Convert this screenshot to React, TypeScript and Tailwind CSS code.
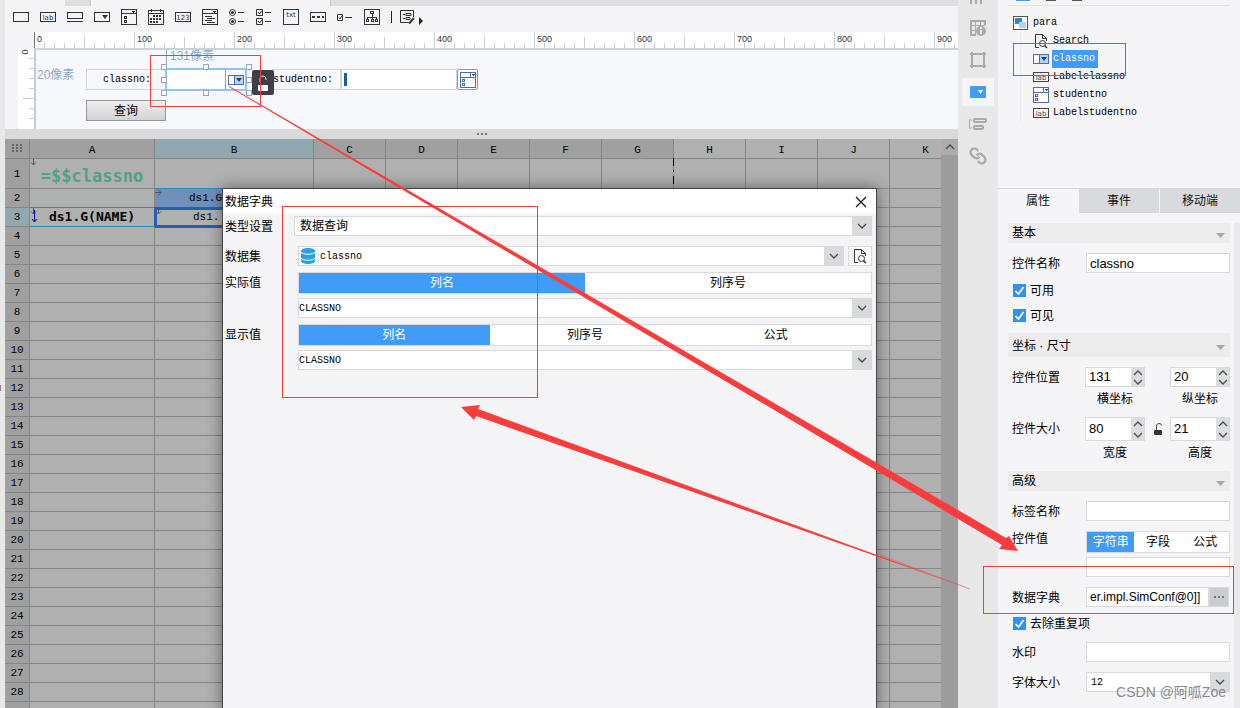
import React from 'react';
import clsx from 'clsx';

const MONO = "font-['Liberation_Mono','Noto_Sans_CJK_SC',monospace]";
const MONO_SANS = "font-['DejaVu_Sans_Mono','Noto_Sans_CJK_SC',monospace]";

interface IconProps {
  children: React.ReactNode;
  className?: string;
}

const Icon: React.FC<IconProps> = ({ children, className }) => (
  <svg
    viewBox="0 0 16 16"
    width="16"
    height="16"
    fill="none"
    stroke="currentColor"
    shapeRendering="crispEdges"
    className={clsx('shrink-0', className)}
    aria-hidden="true"
  >
    {children}
  </svg>
);

const iconText = {
  stroke: 'none',
  fill: 'currentColor',
  textAnchor: 'middle' as const,
  fontFamily: 'DejaVu Sans',
};

const LabelIcon = ({ className }: { className?: string }) => (
  <Icon className={className}>
    <rect x="0.5" y="3.5" width="15" height="9" />
    <text x="8" y="11" fontSize="7" {...iconText}>lab</text>
  </Icon>
);

const ComboIcon = () => (
  <Icon className="text-[#4a6ea9]">
    <rect x="0.5" y="3.5" width="15" height="9" fill="#fff" />
    <rect x="6.5" y="3.5" width="9" height="9" fill="#b9d2f0" />
    <path d="M8 6h6l-3 4z" fill="#223f80" stroke="none" shapeRendering="auto" />
  </Icon>
);

const ListBoxIcon = () => (
  <Icon className="text-[#4a6ea9]">
    <rect x="0.5" y="0.5" width="15" height="15" fill="#fff" />
    <path d="M0 5.5h16M10.5 0v5" />
    <path d="M11 2h4l-2 2z" fill="#223f80" stroke="none" />
    <rect x="2.5" y="7.5" width="2" height="2" />
    <rect x="2.5" y="11.5" width="2" height="2" />
  </Icon>
);

const PageSearchIcon = () => (
  <Icon className="text-[#333]">
    <g shapeRendering="auto">
      <path d="M6 14.5H2.5v-13h7l4 4V8M9.5 1.5v4h4" />
      <circle cx="9.5" cy="10.5" r="3" />
      <path d="M11.5 12.5l2.5 2.5" strokeWidth="1.5" />
    </g>
  </Icon>
);

const Chevron = ({ up }: { up?: boolean }) => (
  <svg width="10" height="6" viewBox="0 0 10 6" fill="none" stroke="#4b4b4b" aria-hidden="true">
    <path d={up ? 'M1 5l4-4 4 4' : 'M1 1l4 4 4-4'} strokeWidth="1.3" />
  </svg>
);

const toolIcons: { name: string; art: React.ReactNode }[] = [
  { name: 'Text field', art: <rect x="0.5" y="3.5" width="15" height="9" /> },
  {
    name: 'Label',
    art: (
      <>
        <rect x="0.5" y="3.5" width="15" height="9" />
        <text x="8" y="11" fontSize="7" {...iconText}>lab</text>
      </>
    ),
  },
  { name: 'Button', art: <path d="M0.5 3.5h15v6h-15zM0 12.5h16" /> },
  {
    name: 'Combo box',
    art: (
      <>
        <rect x="0.5" y="3.5" width="15" height="9" />
        <path d="M8 6h6l-3 4z" fill="currentColor" stroke="none" shapeRendering="auto" />
      </>
    ),
  },
  {
    name: 'Combo check box',
    art: (
      <>
        <path d="M0.5 0.5h15v15h-15zM0 4.5h16M3.5 7.5h2v2h-2zM3.5 11.5h2v2h-2z" />
        <path d="M10 2h4l-2 2z" fill="currentColor" stroke="none" />
      </>
    ),
  },
  {
    name: 'Date',
    art: (
      <>
        <path d="M0.5 1.5h15v14h-15zM0 4.5h16M3.5 0v3M12.5 0v3" />
        <path d="M5 7h9M2 10h12M2 13h9" strokeWidth="2" strokeDasharray="2 1" />
      </>
    ),
  },
  {
    name: 'Number',
    art: (
      <>
        <rect x="0.5" y="3.5" width="15" height="9" />
        <text x="8" y="11" fontSize="7" {...iconText}>123</text>
      </>
    ),
  },
  {
    name: 'Tree combo',
    art: (
      <>
        <path d="M0.5 0.5h15v15h-15zM0 4.5h16M3 7.5h7M5 9.5h8M3 11.5h7M5 13.5h8" />
        <path d="M10 2h4l-2 2z" fill="currentColor" stroke="none" />
      </>
    ),
  },
  {
    name: 'Radio group',
    art: (
      <g shapeRendering="auto">
        <circle cx="3.5" cy="3.5" r="3" />
        <circle cx="3.5" cy="12.5" r="3" />
        <circle cx="3.5" cy="3.5" r="1.5" fill="currentColor" stroke="none" />
        <circle cx="3.5" cy="12.5" r="1.5" fill="currentColor" stroke="none" />
        <path d="M9 3.5h6M9 12.5h6" />
      </g>
    ),
  },
  {
    name: 'Check group',
    art: (
      <g shapeRendering="auto">
        <path d="M0.5 0.5h6v6h-6zM0.5 9.5h6v6h-6zM9 3.5h6M9 12.5h6" />
        <path d="M2 3l1.5 2L6 1.5M2 12l1.5 2L6 10.5" />
      </g>
    ),
  },
  {
    name: 'Text area',
    art: (
      <>
        <rect x="0.5" y="0.5" width="15" height="15" rx="1" />
        <text x="8" y="8" fontSize="7" {...iconText}>txt</text>
      </>
    ),
  },
  {
    name: 'Password',
    art: (
      <>
        <rect x="0.5" y="3.5" width="15" height="9" />
        <path d="M2 8h12" strokeWidth="2" strokeDasharray="3 2" />
      </>
    ),
  },
  {
    name: 'Check box',
    art: (
      <g shapeRendering="auto">
        <path d="M0.5 5.5h5v6h-5zM8 8.5h7M2 8.5l1 1.5 2-3.5" />
      </g>
    ),
  },
  {
    name: 'Tree',
    art: (
      <path d="M0.5 0.5h15v15h-15zM6.5 2.5h3v2h-3zM8 5v3M3.5 10.5v-2h9v2M8 8v2M2.5 10.5h2v2h-2zM7 10.5h2v2H7zM11.5 10.5h2v2h-2z" />
    ),
  },
];

const Toolbar = () => (
  <div className="flex h-[26px] items-center gap-[11px] bg-[#f4f4f7] pb-1 pl-2 text-[#333]">
    {toolIcons.map((tool) => (
      <button key={tool.name} type="button" aria-label={tool.name}>
        <Icon>{tool.art}</Icon>
      </button>
    ))}
    <div className="flex items-center gap-2">
      <span className="h-3 w-px bg-[#222]" />
      <button type="button" aria-label="More widgets" className="flex items-center gap-[3px]">
        <Icon>
          <g shapeRendering="auto">
            <path d="M13.5 8V1.5H0.5v12h8M3 5.5h2M6 4.5h5v2H6zM3 9.5h2M6 8.5h4v2H6z" />
            <path d="M14 9l-5 5.5" strokeWidth="2" />
          </g>
        </Icon>
        <svg width="5" height="8" viewBox="0 0 5 8" aria-hidden="true" className="mt-2">
          <path d="M0 0l4 4-4 4z" fill="#222" />
        </svg>
      </button>
    </div>
  </div>
);

const rulerMarks = [0, 100, 200, 300, 400, 500, 600, 700, 800, 900];
const minorTicks = [10, 20, 30, 40, 60, 70, 80, 90];

const Ruler = () => (
  <div className="flex h-[18px] bg-[#f4f4f7] pl-[29px]">
    <div className="flex min-w-0 flex-1 overflow-hidden border-b-2 border-[#cfd1d5] bg-white">
      {rulerMarks.map((mark) => (
        <div key={mark} className="relative h-4 w-[100px] shrink-0">
          <svg width="100" height="16" stroke="#c9ccd1" shapeRendering="crispEdges" className="absolute">
            <path d="M0.5 0v16" stroke={mark === 0 ? '#777' : '#c9ccd1'} />
            <path d="M50.5 5v11" />
            {minorTicks.map((x) => (
              <path key={x} d={`M${x}.5 11v5`} />
            ))}
          </svg>
          <span className="relative block pl-[3px] text-[9px] leading-[14px] text-[#333]">{mark}</span>
        </div>
      ))}
    </div>
  </div>
);

const handles = [
  'left-[125px] top-[14px]',
  'left-[167px] top-[14px]',
  'left-[210px] top-[14px]',
  'left-[125px] top-[27px]',
  'left-[210px] top-[27px]',
  'left-[125px] top-[40px]',
  'left-[167px] top-[40px]',
  'left-[210px] top-[40px]',
];

// Parameter pane: widgets are placed freely on this canvas
const DesignCanvas = () => (
  <div className="flex h-[79px] bg-[#f4f4f7] pl-[13px]">
    <div className="relative w-4 bg-white">
      <svg width="16" height="79" stroke="#c9ccd1" shapeRendering="crispEdges">
        <path d="M11 8.5h5M11 18.5h5M11 28.5h5M11 38.5h5M5 48.5h11M11 58.5h5M11 68.5h5" />
      </svg>
      <span className="absolute top-[-4px] left-1 rotate-90 text-[9px] leading-3 text-[#333]">0</span>
    </div>
    <div className="relative flex-1 overflow-hidden border-l-2 border-[#c9ccd1] bg-[#f7f8fb] text-xs leading-4">
      <span className="absolute top-[-2px] left-[130px] h-4 border-l border-[#8fabc8] pl-[3px] text-[#8fabc8]">131像素</span>
      <span className="absolute top-[17px] left-px text-[#8fabc8]">20像素</span>
      <label
        htmlFor="w-classno"
        className={clsx(MONO, 'absolute top-[19px] left-[50px] h-[21px] w-[80px] border border-[#d3d4d6] pl-4 text-[10px] leading-[20px] text-black')}
      >
        classno:
      </label>
      <div className="absolute top-[18px] left-[129px] flex h-[23px] w-[82px] border-2 border-[#8cc4fb] bg-white">
        <input id="w-classno" className="min-w-0 flex-1" />
        <button type="button" aria-label="Open classno" className="flex w-5 items-center justify-center border-l border-[#999]">
          <ComboIcon />
        </button>
      </div>
      {handles.map((pos) => (
        <span key={pos} className={clsx('absolute h-[6px] w-[6px] border border-[#8fa9c2] bg-white', pos)} />
      ))}
      <div className={clsx(MONO, 'absolute top-[19px] left-[236px] flex h-[21px] text-[10px] leading-[20px]')}>
        <label htmlFor="w-studentno" className="w-[68px] border-y border-[#d3d4d6] pl-px">studentno:</label>
        <span className="flex w-[117px] items-center border border-l-2 border-[#d3d4d6] bg-white pl-[2px]">
          <span className="h-[13px] w-[3px] shrink-0 bg-[#1d5c97]" />
          <input id="w-studentno" className="min-w-0 flex-1" />
        </span>
        <button type="button" aria-label="Open studentno" className="flex w-[21px] items-center justify-center rounded-xs border border-[#999] bg-white">
          <ListBoxIcon />
        </button>
      </div>
      <span className="absolute top-5 left-[216px] flex h-[25px] w-[22px] items-center justify-center rounded-xs bg-[#3d4046]">
        <svg width="10" height="16" viewBox="0 0 10 16" fill="none" aria-hidden="true">
          <path d="M2 7V4a3 3 0 0 1 6 0v1" stroke="#e8e8e8" />
          <rect y="10" width="10" height="6" rx="1" fill="#fff" />
        </svg>
      </span>
      <button
        type="button"
        className="absolute top-[50px] left-[50px] h-[21px] w-[80px] border border-[#979797] bg-gradient-to-b from-[#efefef] to-[#d3d3d3] leading-[18px] text-black"
      >
        查询
      </button>
    </div>
  </div>
);

const columns = ['A', 'B', 'C', 'D', 'E', 'F', 'G', 'H', 'I', 'J', 'K'];
const rows = Array.from({ length: 28 }, (_, i) => i + 1);

const CellArrow = ({ right }: { right?: boolean }) => (
  <svg width="7" height="7" viewBox="0 0 7 7" stroke="#555" fill="none" className="absolute top-0 left-0" aria-hidden="true">
    <path d={right ? 'M0 3.5h6M3.5 1L6 3.5 3.5 6' : 'M3.5 0v6M1 3.5L3.5 6 6 3.5'} />
  </svg>
);

const cellContent = (col: string, row: number) => {
  if (col === 'A' && row === 1) {
    return (
      <>
        <CellArrow />
        <span className={clsx(MONO_SANS, 'block pt-1 text-[17px] leading-5 font-bold text-[#51a08b]')}>=$$classno</span>
      </>
    );
  }
  if (col === 'A' && row === 3) {
    return (
      <>
        <CellArrow />
        <svg width="7" height="13" viewBox="0 0 7 13" className="absolute top-[2px] left-px" aria-hidden="true">
          <path d="M3.5 0v11M1 9l2.5 3L6 9" stroke="#0000c8" fill="none" />
        </svg>
        <span className={clsx(MONO_SANS, 'block text-[13px] leading-4 font-bold')}>ds1.G(NAME)</span>
      </>
    );
  }
  if (col === 'B' && row === 2) {
    return (
      <>
        <CellArrow right />
        <span className="block pl-[34px] text-left text-[11px] leading-4">ds1.G</span>
      </>
    );
  }
  if (col === 'B' && row === 3) {
    return (
      <>
        <CellArrow />
        <span className="block pl-[38px] text-left text-[11px] leading-4">ds1.</span>
      </>
    );
  }
  if (col === 'G' && row === 1) {
    // page break marker
    return (
      <svg width="1" height="30" stroke="#000" className="absolute top-[-1px] right-[-1px]" aria-hidden="true">
        <path d="M0.5 0v30" strokeDasharray="8 4 2 4" />
      </svg>
    );
  }
  return null;
};

const cellStyle = (col: string, row: number) => {
  if (col === 'B' && row === 2) return 'border-[#1f93b3] bg-[#6e90b9]';
  if (col === 'B' && row === 3) return 'border-[#2360b3] outline-3 -outline-offset-2 outline-[#2360b3]';
  if (col === 'A' && row === 3) return 'border-[#1f93b3]';
  if (col === 'A' && row === 2) return 'border-r-[#868686] border-b-[#1f93b3]';
  return 'border-[#868686]';
};

const Sheet = () => (
  <div className="flex min-h-0 flex-1 overflow-hidden bg-[#b0b0b0]">
    <div className="min-w-0 flex-1 overflow-hidden">
      <table className={clsx(MONO, 'w-[957px] table-fixed border-separate border-spacing-0 text-black')}>
        <colgroup>
          <col className="w-[25px]" />
          <col className="w-[125px]" />
          <col className="w-[159px]" />
          {columns.slice(2).map((c) => (
            <col key={c} className="w-[72px]" />
          ))}
        </colgroup>
        <thead>
          <tr className="h-[20px] text-[11px] leading-4">
            <th className="border-r border-b border-[#868686] bg-[#a0a0a0] p-0">
              <svg width="11" height="9" className="mx-auto" fill="#666" aria-hidden="true">
                {[0, 4, 8].map((x) => [0, 3, 6].map((y) => <rect key={`${x}-${y}`} x={x} y={y} width="2" height="2" />))}
              </svg>
            </th>
            {columns.map((c) => (
              <th
                key={c}
                className={clsx(
                  'border-r border-b border-[#868686] p-0 pt-[3px] font-normal',
                  c === 'B' ? 'bg-[#92a8b0]' : c > 'G' ? 'bg-[#b0b0b0]' : 'bg-[#a0a0a0]',
                )}
              >
                {c}
              </th>
            ))}
          </tr>
        </thead>
        <tbody>
          {rows.map((r) => (
            <tr key={r} className={r === 1 ? 'h-[30px]' : 'h-[19px]'}>
              <th
                className={clsx(
                  'border-r border-b border-[#868686] p-0 text-[11px] leading-4 font-normal',
                  r === 3 ? 'bg-[#92a8b0]' : 'bg-[#a0a0a0]',
                )}
              >
                {r}
              </th>
              {columns.map((c) => (
                <td key={c} className={clsx('relative border-r border-b p-0 text-center', cellStyle(c, r))}>
                  {c === 'B' && r === 2 && <span className="absolute inset-x-0 top-[-1px] border-t border-[#1f93b3]" />}
                  {cellContent(c, r)}
                </td>
              ))}
            </tr>
          ))}
          <tr className="h-[19px]">
            <td className="border-r border-[#868686] bg-[#a0a0a0]" />
            {columns.map((c) => (
              <td key={c} className="border-r border-[#868686]" />
            ))}
          </tr>
        </tbody>
      </table>
    </div>
    <div className="w-[17px] bg-[#9c9c9c]">
      <button type="button" aria-label="Scroll up" className="flex h-4 w-full items-center justify-center bg-[#acacac]">
        <Chevron up />
      </button>
    </div>
  </div>
);

interface ComboProps {
  id: string;
  value: string;
  textClass?: string;
  icon?: React.ReactNode;
}

const Combo: React.FC<ComboProps> = ({ id, value, textClass, icon }) => (
  <div className="flex h-5 min-w-0 flex-1 border border-[#d8d9dc] bg-white">
    {icon}
    <div className="relative min-w-0 flex-1">
      <select id={id} className={clsx('h-[18px] w-full appearance-none bg-transparent', textClass)} defaultValue={value}>
        <option>{value}</option>
      </select>
      <span className="pointer-events-none absolute inset-y-0 right-0 flex w-[19px] items-center justify-center bg-[#d8dadd]">
        <Chevron />
      </span>
    </div>
  </div>
);

const Segmented = ({ options }: { options: string[] }) => (
  <div className="flex h-[22px] min-w-0 flex-1 border border-[#d8d9dc] bg-white">
    {options.map((o, i) => (
      <button key={o} type="button" className={clsx('flex-1 leading-5', i === 0 && 'bg-[#419bf9] text-white')}>
        {o}
      </button>
    ))}
  </div>
);

const DatabaseIcon = () => (
  <svg width="16" height="18" viewBox="0 0 16 18" className="ml-px shrink-0" aria-hidden="true">
    <path d="M1 4C1 0 15 0 15 4v10c0 4-14 4-14 0z" fill="#29a3e0" />
    <path d="M1 5c1 3 13 3 14 0M1 11c1 3 13 3 14 0" stroke="#fff" fill="none" />
  </svg>
);

const DictionaryDialog = () => (
  <div
    role="dialog"
    aria-label="数据字典"
    className="absolute top-[188px] bottom-[-2px] left-[222px] w-[655px] border border-[#484848] bg-[#f4f4f7] shadow-[0_0_14px_rgba(0,0,0,0.45)]"
  >
    <div className="flex h-[25px] items-center justify-between bg-white pr-[9px] pl-[2px]">
      <h2>数据字典</h2>
      <button type="button" aria-label="Close">
        <svg width="12" height="12" viewBox="0 0 12 12" stroke="#111" strokeWidth="1.2" aria-hidden="true">
          <path d="M1 1l10 10M11 1L1 11" />
        </svg>
      </button>
    </div>
    <div className="pt-[2px] pr-1 pl-[2px]">
      <div className="flex h-5 items-center">
        <label htmlFor="d-type" className="w-[69px] pt-px">类型设置</label>
        <Combo id="d-type" value="数据查询" textClass="pl-[5px]" />
      </div>
      <div className="mt-[10px] flex h-5 items-center">
        <label htmlFor="d-set" className="w-[73px] pt-px">数据集</label>
        <Combo id="d-set" value="classno" icon={<DatabaseIcon />} textClass={clsx(MONO, 'pl-1 text-[10px]')} />
        <button type="button" aria-label="Preview" className="ml-1 flex h-5 w-6 items-center justify-center border border-[#d8d9dc] bg-white">
          <PageSearchIcon />
        </button>
      </div>
      <div className="mt-[6px] flex h-[22px] items-center">
        <label htmlFor="d-actual" className="w-[73px]">实际值</label>
        <Segmented options={['列名', '列序号']} />
      </div>
      <div className="mt-1 flex pl-[73px]">
        <Combo id="d-actual" value="CLASSNO" textClass={clsx(MONO, 'text-[10px]')} />
      </div>
      <div className="mt-[6px] flex h-[22px] items-center">
        <label htmlFor="d-display" className="w-[73px]">显示值</label>
        <Segmented options={['列名', '列序号', '公式']} />
      </div>
      <div className="mt-1 flex pl-[73px]">
        <Combo id="d-display" value="CLASSNO" textClass={clsx(MONO, 'text-[10px]')} />
      </div>
    </div>
  </div>
);

const SideBar = () => (
  <nav className="flex w-10 shrink-0 flex-col items-center bg-[#e8e8e8] text-[#aaa]">
    <div className="flex h-[14px] w-4 items-start gap-[3px]">
      <span className="h-1 w-[2px] bg-[#aaa]" />
      <span className="h-1 w-[2px] bg-[#aaa]" />
      <span className="h-1 w-[2px] bg-[#aaa]" />
    </div>
    <button type="button" aria-label="Cell attributes" className="flex h-7 w-8 items-center justify-center">
      <Icon>
        <g shapeRendering="auto">
          <path d="M15 5V1H1v14h5" strokeWidth="2" />
          <path d="M1 5.5h14M5.5 1v14M1 10.5h5M10.5 1v4" />
          <circle cx="11" cy="11" r="5" fill="currentColor" stroke="none" />
          <path d="M11 10v4M11 7v2" stroke="#e8e8e8" strokeWidth="2" />
        </g>
      </Icon>
    </button>
    <button type="button" aria-label="Floating element" className="mt-1 flex h-7 w-8 items-center justify-center">
      <Icon>
        <path d="M2 0v16M14 0v16M0 2h16M0 14h16" strokeWidth="2" />
      </Icon>
    </button>
    <button type="button" aria-label="Widget settings" className="mt-1 flex h-7 w-8 items-center justify-center bg-[#f5f5f7]">
      <svg width="16" height="12" viewBox="0 0 16 12" aria-hidden="true">
        <rect width="16" height="12" rx="1" fill="#419bf9" />
        <path d="M8 4h5l-2.5 4z" fill="#fff" />
      </svg>
    </button>
    <button type="button" aria-label="Conditions" className="mt-1 flex h-7 w-8 items-center justify-center">
      <svg width="18" height="14" viewBox="0 0 18 14" fill="none" stroke="currentColor" aria-hidden="true">
        <path d="M3 3H.5v8H3" />
        <rect x="5" y="2" width="12" height="3" rx="1" strokeWidth="2" />
        <rect x="5" y="9" width="9" height="3" rx="1" strokeWidth="2" />
      </svg>
    </button>
    <button type="button" aria-label="Hyperlink" className="mt-1 flex h-7 w-8 items-center justify-center">
      <svg width="18" height="18" viewBox="0 0 24 24" fill="none" stroke="currentColor" strokeWidth="3" aria-hidden="true">
        <g transform="matrix(-1 0 0 1 24 0)">
          <path d="M10 13a5 5 0 0 0 7.54.54l3-3a5 5 0 0 0-7.07-7.07l-1.72 1.71" />
          <path d="M14 11a5 5 0 0 0-7.54-.54l-3 3a5 5 0 0 0 7.07 7.07l1.71-1.71" />
        </g>
      </svg>
    </button>
  </nav>
);

const treeItems = [
  { name: 'Search', icon: <PageSearchIcon /> },
  { name: 'classno', icon: <ComboIcon />, selected: true },
  { name: 'Labelclassno', icon: <LabelIcon className="text-[#444]" /> },
  { name: 'studentno', icon: <ListBoxIcon /> },
  { name: 'Labelstudentno', icon: <LabelIcon className="text-[#444]" /> },
];

const WidgetTree = () => (
  <div className="h-[188px]">
    <div className="mx-[10px] flex h-[6px] gap-3 border-b border-[#e3e3e5] pl-2">
      <span className="h-px w-[14px] bg-[#419bf9]" />
      <span className="ml-1 h-px w-[10px] bg-[#555]" />
      <span className="ml-1 h-px w-[10px] bg-[#555]" />
    </div>
    <ul className={clsx(MONO, 'pt-2 pl-[15px] text-[10px] leading-4 text-black')}>
      <li className="flex h-[18px] items-center gap-[5px]">
        <svg width="15" height="14" viewBox="0 0 15 14" aria-hidden="true">
          <rect x="0.5" y="0.5" width="14" height="13" fill="#fff" stroke="#555" />
          <rect x="2" y="2" width="7" height="6" fill="#3089c8" />
          <rect x="6" y="6" width="7" height="6" fill="#b5d0f3" />
        </svg>
        para
      </li>
      {treeItems.map((item) => (
        <li key={item.name} className="ml-[7px] flex h-[18px] items-center border-l border-[#ececee] pl-3">
          {item.icon}
          <span className={clsx('ml-[3px] pr-[3px] pl-px', item.selected && 'bg-[#419bf9] leading-[18px] text-white')}>
            {item.name}
          </span>
        </li>
      ))}
    </ul>
  </div>
);

const SectionTitle = ({ children, className }: { children: React.ReactNode; className: string }) => (
  <h3 className={clsx('flex items-center justify-between bg-[#ececec] pr-[5px] pl-1', className)}>
    {children}
    <svg width="9" height="5" viewBox="0 0 9 5" className="mt-1" aria-hidden="true">
      <path d="M0 0h9L4.5 5z" fill="#a8a8a8" />
    </svg>
  </h3>
);

const TextRow = ({ id, label, value }: { id: string; label: string; value?: string }) => (
  <div className="mt-[10px] flex h-5 items-center pl-1">
    <label htmlFor={id} className="w-[74px] shrink-0 pt-px">{label}</label>
    <input
      id={id}
      defaultValue={value}
      className="h-5 min-w-0 flex-1 border border-[#d8d9dc] bg-white pl-[3px] text-[13px]"
    />
  </div>
);

const CheckRow = ({ label }: { label: string }) => (
  <label className="mt-2 flex h-[17px] items-center gap-1 pl-[5px]">
    <span className="relative flex h-[13px] w-[13px]">
      <input type="checkbox" defaultChecked className="h-[13px] w-[13px] appearance-none bg-[#3391f2]" />
      <svg width="13" height="13" viewBox="0 0 13 13" className="pointer-events-none absolute" aria-hidden="true">
        <path d="M2.5 7l3 3L10.5 3" stroke="#fff" strokeWidth="1.7" fill="none" />
      </svg>
    </span>
    {label}
  </label>
);

const Spinner = ({ label, value, className }: { label: string; value: string; className: string }) => (
  <div className="w-[60px]">
    <div className={clsx('flex border border-[#d8d9dc] bg-white', className)}>
      <input aria-label={label} defaultValue={value} className="min-w-0 flex-1 pl-[3px] text-[13px]" />
      <span className="flex w-[13px] shrink-0 flex-col bg-[#dcdde0]">
        <button type="button" aria-label={`${label} +`} className="flex flex-1 items-center justify-center">
          <Chevron up />
        </button>
        <button type="button" aria-label={`${label} -`} className="flex flex-1 items-center justify-center">
          <Chevron />
        </button>
      </span>
    </div>
    <p className="mt-1 pt-px text-center leading-[15px]">{label}</p>
  </div>
);

const PropertyPanel = () => (
  <aside className="flex w-[242px] shrink-0 flex-col bg-[#f5f5f7]">
    <WidgetTree />
    <div className="flex h-[25px] shrink-0 gap-px border-t border-[#d8dadd]">
      {['属性', '事件', '移动端'].map((t, i) => (
        <button key={t} type="button" className={clsx('flex-1 text-[#111]', i > 0 && 'bg-[#d8dadd]')}>
          {t}
        </button>
      ))}
    </div>
    <div className="mt-[10px] flex flex-1">
      <form className="min-w-0 flex-1 pr-1 pl-[10px]">
        <SectionTitle className="h-5">基本</SectionTitle>
        <TextRow id="p-name" label="控件名称" value="classno" />
        <div className="h-px" />
        <CheckRow label="可用" />
        <CheckRow label="可见" />
        <SectionTitle className="mt-[9px] h-6 pt-px">坐标 · 尺寸</SectionTitle>
        <div className="mt-[10px] flex pl-1">
          <span className="w-[73px] leading-[22px]">控件位置</span>
          <Spinner label="横坐标" value="131" className="h-5" />
          <span className="flex-1" />
          <Spinner label="纵坐标" value="20" className="h-5" />
        </div>
        <div className="mt-[10px] flex pl-1">
          <span className="w-[73px] leading-6">控件大小</span>
          <Spinner label="宽度" value="80" className="h-6" />
          <span className="flex h-6 flex-1 items-center justify-center">
            <svg width="10" height="13" viewBox="0 0 10 13" fill="none" aria-hidden="true">
              <path d="M3.5 7V3.5a2.500 2.500 0 0 1 5-1" stroke="#444" />
              <rect x="1" y="7" width="8" height="5" rx="1" fill="#333" />
            </svg>
          </span>
          <Spinner label="高度" value="21" className="h-6" />
        </div>
        <SectionTitle className="mt-[10px] h-5">高级</SectionTitle>
        <TextRow id="p-label" label="标签名称" />
        <div className="mt-[10px] flex h-[22px] pl-1">
          <label htmlFor="p-value" className="w-[74px] shrink-0">控件值</label>
          <Segmented options={['字符串', '字段', '公式']} />
        </div>
        <div className="mt-1 flex pl-[78px]">
          <input id="p-value" className="h-5 min-w-0 flex-1 border border-[#d8d9dc] bg-white" />
        </div>
        <div className="mt-[10px] flex h-5 items-center pl-1">
          <label htmlFor="p-dict" className="w-[74px] shrink-0 pt-px">数据字典</label>
          <input
            id="p-dict"
            defaultValue="er.impl.SimConf@0]]"
            className="h-5 min-w-0 flex-1 border border-[#d8d9dc] bg-white pl-[3px] text-xs"
          />
          <button type="button" aria-label="Edit dictionary" className="mr-px flex h-5 w-5 items-center justify-center gap-[2px] border border-[#d8d9dc] bg-[#cbccd0]">
            <span className="h-[2px] w-[2px] bg-[#777]" />
            <span className="h-[2px] w-[2px] bg-[#777]" />
            <span className="h-[2px] w-[2px] bg-[#777]" />
          </button>
        </div>
        <CheckRow label="去除重复项" />
        <TextRow id="p-mark" label="水印" />
        <div className="mt-[10px] flex h-5 items-center pl-1">
          <label htmlFor="p-size" className="w-[74px] shrink-0 pt-px">字体大小</label>
          <Combo id="p-size" value="12" textClass={clsx(MONO, 'pl-1 text-[10px]')} />
        </div>
      </form>
      <div className="w-[6px] rounded-t-xs bg-[#e9e9eb]" />
    </div>
  </aside>
);

// Red callouts drawn over the whole window
const Annotations = () => (
  <svg
    width="1240"
    height="708"
    fill="none"
    stroke="#fb3c3c"
    className="pointer-events-none absolute top-0 left-0"
    aria-hidden="true"
  >
    <g shapeRendering="crispEdges">
      <rect x="150.5" y="55.5" width="110" height="51" />
      <rect x="282.5" y="206.5" width="255" height="191" />
      <rect x="1013.5" y="43.5" width="112" height="32" />
      <rect x="983.5" y="566.5" width="250" height="47" />
    </g>
    <g fill="#fb3c3c" stroke="none">
      <path d="M229 86L1006 538l3-2 9 15-19-2 3-4L229 87z" />
      <path d="M970 589L478 409l2-4-19 2 13 13 2-4z" />
    </g>
    <path d="M970 589L880 555" strokeWidth="0.5" />
  </svg>
);

export default function App() {
  return (
    <div className="relative flex h-screen overflow-hidden bg-[#e8e8e8] font-['Liberation_Sans','Noto_Sans_CJK_SC',sans-serif] text-xs leading-4 text-black">
      <div className="flex w-[5px] shrink-0 items-center pt-[68px]">
        <span className="h-[6px] w-px bg-[#888]" />
      </div>
      <main className="flex min-w-0 flex-1 flex-col">
        <div className="flex h-[6px] shrink-0 bg-[#dedee0]">
          <span className="w-[60px] bg-[#f4f4f7]" />
          <span className="w-[26px] border-r border-[#c8c8ca]" />
          <span className="w-[240px] border-r border-[#c8c8ca] bg-[#f4f4f7]" />
        </div>
        <Toolbar />
        <Ruler />
        <DesignCanvas />
        <div className="flex h-[10px] shrink-0 items-center justify-center gap-[2px] bg-[#dadadc]">
          <span className="h-[2px] w-[2px] bg-[#777]" />
          <span className="h-[2px] w-[2px] bg-[#777]" />
          <span className="h-[2px] w-[2px] bg-[#777]" />
        </div>
        <Sheet />
      </main>
      <SideBar />
      <PropertyPanel />
      <DictionaryDialog />
      <Annotations />
      <span className="pointer-events-none absolute right-[14px] bottom-[6px] text-[14px] leading-5 text-[#8a8a8a]">
        CSDN @阿呱Zoe
      </span>
    </div>
  );
}
